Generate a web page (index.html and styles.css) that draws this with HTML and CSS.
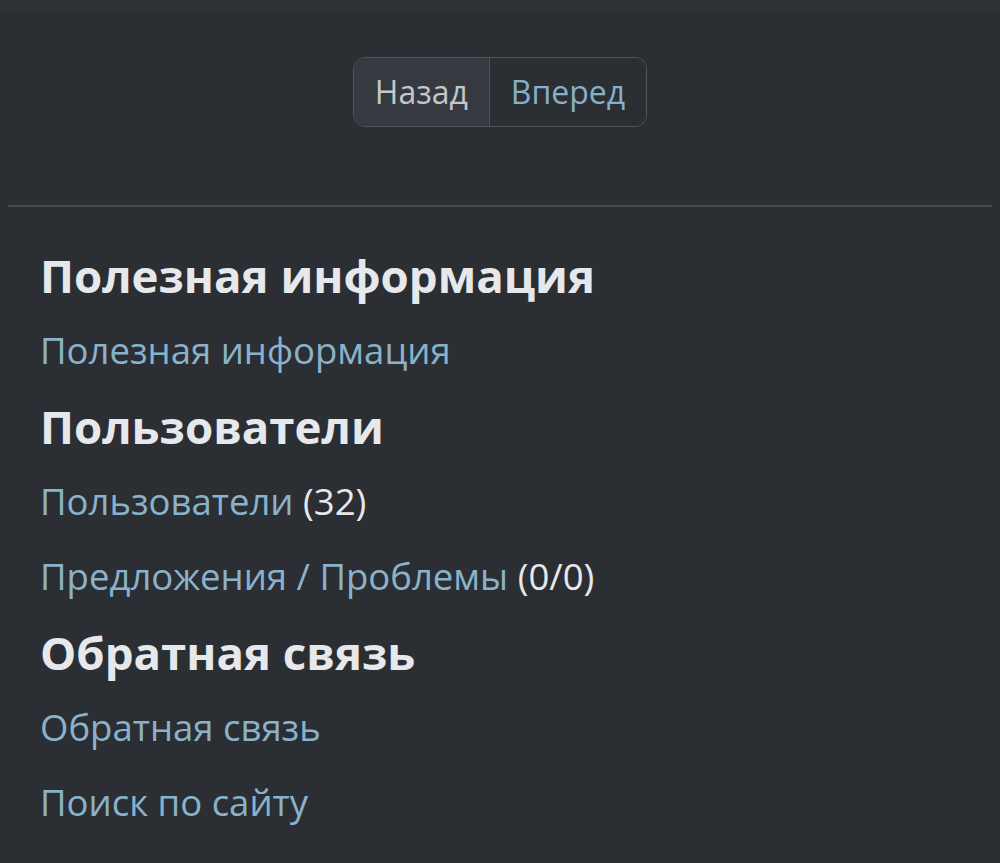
FILE: index.html
```html
<!DOCTYPE html>
<html lang="ru">
<head>
<meta charset="utf-8">
<link rel="stylesheet" href="styles.css">
</head>
<body>
<div class="topband"></div>
<nav class="pager">
  <div class="btn-group">
    <span class="btn btn-prev">Назад</span>
    <a class="btn btn-next" href="#">Вперед</a>
  </div>
</nav>
<hr class="divider">
<div class="content">
  <h2 class="heading">Полезная информация</h2>
  <p class="row"><a href="#">Полезная информация</a></p>
  <h2 class="heading">Пользователи</h2>
  <p class="row"><a href="#">Пользователи</a> (32)</p>
  <p class="row"><a href="#">Предложения / Проблемы</a> (0/0)</p>
  <h2 class="heading">Обратная связь</h2>
  <p class="row"><a href="#">Обратная связь</a></p>
  <p class="row"><a href="#">Поиск по сайту</a></p>
</div>
</body>
</html>
```
FILE: styles.css
```css
html, body {
  margin: 0;
  padding: 0;
  background: #2b2f33;
  color: #e3e5e8;
  font-family: "Open Sans", "Noto Sans", sans-serif;
}
.topband {
  height: 14px;
  background: #2e3236;
}
.pager {
  display: flex;
  justify-content: center;
  padding-top: 43px;
}
.btn-group {
  display: flex;
  border: 1px solid #50555b;
  border-radius: 12px;
  overflow: hidden;
  height: 68px;
}
.btn {
  display: flex;
  align-items: center;
  font-size: 32px;
  text-decoration: none;
  padding: 0 21px 1px 21px;
}
.btn-prev {
  background: #363a40;
  color: #c4c7cb;
  border-right: 1px solid #4b5056;
}
.btn-next {
  background: #2b2f33;
  color: #86afc9;
}
.divider {
  margin: 78px 8px 0;
  border: 0;
  height: 2px;
  background: #464b51;
}
.content {
  padding: 39px 40px 0;
}
.heading {
  margin: 0;
  font-size: 45.6px;
  font-weight: 700;
  line-height: 75px;
  color: #e6e8eb;
}
.content .heading:first-child {
  margin-top: -8px;
}
.row {
  margin: 0;
  font-size: 36.5px;
  line-height: 75.5px;
  color: #e6e8eb;
}
.row a {
  color: #8ab2cb;
  text-decoration: none;
}
```
